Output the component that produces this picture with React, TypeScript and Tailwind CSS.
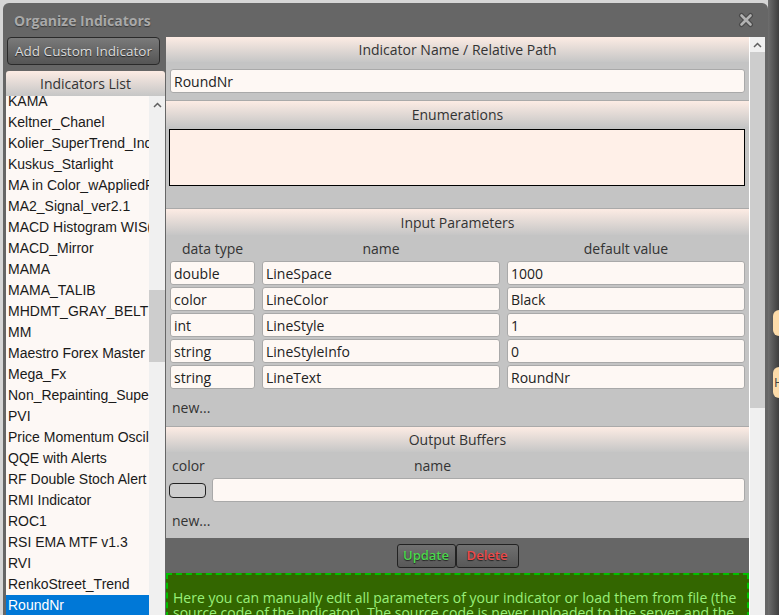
import React from 'react';

const indicators = [
  'KAMA',
  'Keltner_Chanel',
  'Kolier_SuperTrend_Indi',
  'Kuskus_Starlight',
  'MA in Color_wAppliedPrice',
  'MA2_Signal_ver2.1',
  'MACD Histogram WIS(2)',
  'MACD_Mirror',
  'MAMA',
  'MAMA_TALIB',
  'MHDMT_GRAY_BELT',
  'MM',
  'Maestro Forex Master',
  'Mega_Fx',
  'Non_Repainting_SuperTrend',
  'PVI',
  'Price Momentum Oscillator',
  'QQE with Alerts',
  'RF Double Stoch Alert',
  'RMI Indicator',
  'ROC1',
  'RSI EMA MTF v1.3',
  'RVI',
  'RenkoStreet_Trend',
  'RoundNr',
];

const inputParams = [
  { type: 'double', name: 'LineSpace', value: '1000' },
  { type: 'color', name: 'LineColor', value: 'Black' },
  { type: 'int', name: 'LineStyle', value: '1' },
  { type: 'string', name: 'LineStyleInfo', value: '0' },
  { type: 'string', name: 'LineText', value: 'RoundNr' },
];

const ChevronUp = () => (
  <svg width="9" height="6" viewBox="0 0 9 6">
    <path d="M1 5 L4.5 1.5 L8 5" fill="none" stroke="#606060" strokeWidth="1.5" />
  </svg>
);

const SectionHeader = ({ title, h }: { title: string; h: string }) => (
  <div className={`${h} flex items-center justify-center bg-linear-to-b from-[#fdece4] to-[#c6c6c6] text-[14px] text-[#333]`}>
    {title}
  </div>
);

const Field = ({ value, className = '' }: { value: string; className?: string }) => (
  <div className={`h-[24px] flex items-center pl-[3px] bg-[#fef8f4] border border-[#a9a9a9] rounded-[3px] text-[14px] text-[#222] ${className}`}>
    {value}
  </div>
);

const App: React.FC = () => {
  return (
    <div className="w-[779px] h-[615px] overflow-hidden bg-[#d6d6d6] flex font-['Open_Sans',sans-serif]">
      {/* Dialog */}
      <div className="mt-[3px] ml-[3px] w-[765px] bg-[#666] rounded-t-[6px] flex flex-col px-[3px]">
        {/* Title bar */}
        <div className="h-[34px] shrink-0 flex items-center justify-between pl-[8px] pr-[11px]">
          <span className="text-[14px] font-bold text-[#a9a9a9] [text-shadow:0_1px_1px_#3a3a3a]">Organize Indicators</span>
          <svg width="16" height="16" viewBox="0 0 16 16">
            <path d="M3.5 3.5 L12.5 12.5 M12.5 3.5 L3.5 12.5" stroke="#4a4a4a" strokeWidth="5" strokeLinecap="round" />
            <path d="M3.5 3.5 L12.5 12.5 M12.5 3.5 L3.5 12.5" stroke="#b2b2b2" strokeWidth="2.6" strokeLinecap="round" />
          </svg>
        </div>

        <div className="flex flex-1 min-h-0 gap-[1px]">
          {/* Left column */}
          <div className="w-[159px] flex flex-col">
            <button className="ml-[1px] w-[153px] h-[28px] shrink-0 rounded-[4px] border border-[#2a2a2a] bg-linear-to-b from-[#7a7a7a] to-[#555] text-[13.5px] text-[#dcdcdc] [text-shadow:0_1px_1px_#222]">
              Add Custom Indicator
            </button>
            <div className="mt-[6px] h-[25px] shrink-0 flex items-center justify-center bg-linear-to-b from-[#fdece4] to-[#c6c6c6] text-[14px] text-[#333] rounded-t-[3px]">
              Indicators List
            </div>
            <div className="flex flex-1 min-h-0">
              <div className="w-[143px] overflow-hidden bg-[#fdf8f5] font-['Liberation_Sans',Arial,sans-serif]">
                <div className="-mt-[5px]">
                  {indicators.map((name) => (
                    <div
                      key={name}
                      className={`h-[21px] leading-[21px] pl-[2px] whitespace-nowrap overflow-hidden text-[14px] ${
                        name === 'RoundNr' ? 'bg-[#0078d7] text-white' : 'text-[#1a1a1a]'
                      }`}
                    >
                      {name}
                    </div>
                  ))}
                </div>
              </div>
              {/* list scrollbar */}
              <div className="w-[16px] bg-[#f0f0f0] flex flex-col">
                <div className="h-[17px] flex items-center justify-center">
                  <ChevronUp />
                </div>
                <div className="mt-[177px] h-[72px] bg-[#cdcdcd]" />
              </div>
            </div>
          </div>

          {/* Right panel */}
          <div className="w-[599px] flex">
            <div className="w-[583px] overflow-hidden bg-[#c4c4c4]">
              {/* Name */}
              <SectionHeader title="Indicator Name / Relative Path" h="h-[25px]" />
              <div className="px-[4px] pt-[7px] pb-[7px] border-b border-[#aaa]">
                <Field value="RoundNr" />
              </div>

              {/* Enumerations */}
              <SectionHeader title="Enumerations" h="h-[26px]" />
              <div className="pl-[3px] pr-[4px] pt-[2px] pb-[22px] border-b border-[#aaa]">
                <div className="h-[57px] bg-[#fff0e8] border border-black" />
              </div>

              {/* Input parameters */}
              <SectionHeader title="Input Parameters" h="h-[26px]" />
              <div className="px-[4px] border-b border-[#aaa]">
                <div className="grid grid-cols-[85px_238px_238px] gap-x-[7px] h-[26px] items-center text-[14px] text-[#333] text-center">
                  <span>data type</span>
                  <span>name</span>
                  <span>default value</span>
                </div>
                <div className="flex flex-col gap-[2px]">
                  {inputParams.map((p) => (
                    <div key={p.name} className="grid grid-cols-[85px_238px_238px] gap-x-[7px]">
                      <Field value={p.type} />
                      <Field value={p.name} />
                      <Field value={p.value} />
                    </div>
                  ))}
                </div>
                <div className="pt-[10px] pb-[9px] h-[37px] leading-[18px] text-[14px] text-[#333] pl-[2px]">new...</div>
              </div>

              {/* Output buffers */}
              <SectionHeader title="Output Buffers" h="h-[25px]" />
              <div className="px-[4px]">
                <div className="flex h-[26px] items-center text-[14px] text-[#333]">
                  <span className="pl-[2px] w-[42px]">color</span>
                  <span className="flex-1 text-center pr-[92px]">name</span>
                </div>
                <div className="flex items-center gap-[6px] -ml-[1px]">
                  <div className="w-[37px] h-[15px] rounded-[4px] border border-[#222] bg-[#cdcdcd]" />
                  <Field value="" className="flex-1" />
                </div>
                <div className="pt-[10px] h-[36px] leading-[18px] text-[14px] text-[#333] pl-[2px]">new...</div>
              </div>

              {/* Buttons */}
              <div className="h-[35px] bg-[#666] flex justify-center pt-[6px]">
                <button className="w-[59px] h-[24px] rounded-[3px] border border-[#222] bg-linear-to-b from-[#707070] to-[#585858] text-[13px] font-semibold text-[#4cd84c] [text-shadow:0_1px_1px_#222]">
                  Update
                </button>
                <button className="w-[63px] h-[24px] rounded-[3px] border border-[#222] bg-linear-to-b from-[#707070] to-[#585858] text-[13px] font-semibold text-[#f04848] [text-shadow:0_1px_1px_#222]">
                  Delete
                </button>
              </div>

              {/* Info */}
              <div className="bg-[#336600] border-2 border-dashed border-[#00c000] pt-[15px] pl-[5px] pr-[3px] pb-[20px] text-[14px] leading-[15px] text-[#99f07a]">
                Here you can manually edit all parameters of your indicator or load them from file (the source code of the indicator). The source code is never uploaded to the server and the file is read only locally in your browser.
              </div>
            </div>

            {/* panel scrollbar */}
            <div className="w-[16px] bg-[#f0f0f0] flex flex-col border-l border-white">
              <div className="h-[15px] flex items-center justify-center">
                <ChevronUp />
              </div>
              <div className="h-[356px] bg-[#cdcdcd]" />
            </div>
          </div>
        </div>
      </div>

      {/* Page behind the dialog */}
      <div className="flex-1 bg-linear-to-r from-[#6e6e6e] to-[#3e3e3e] flex flex-col items-end">
        <div className="mt-[310px] w-[6px] h-[26px] rounded-l-[6px] bg-[#fddcaa]" />
        <div className="mt-[31px] w-[6px] h-[31px] rounded-l-[6px] bg-[#fddcaa] text-[13px] leading-[31px] text-[#444] overflow-hidden pl-[1px]">H</div>
      </div>
    </div>
  );
};

export default App;
